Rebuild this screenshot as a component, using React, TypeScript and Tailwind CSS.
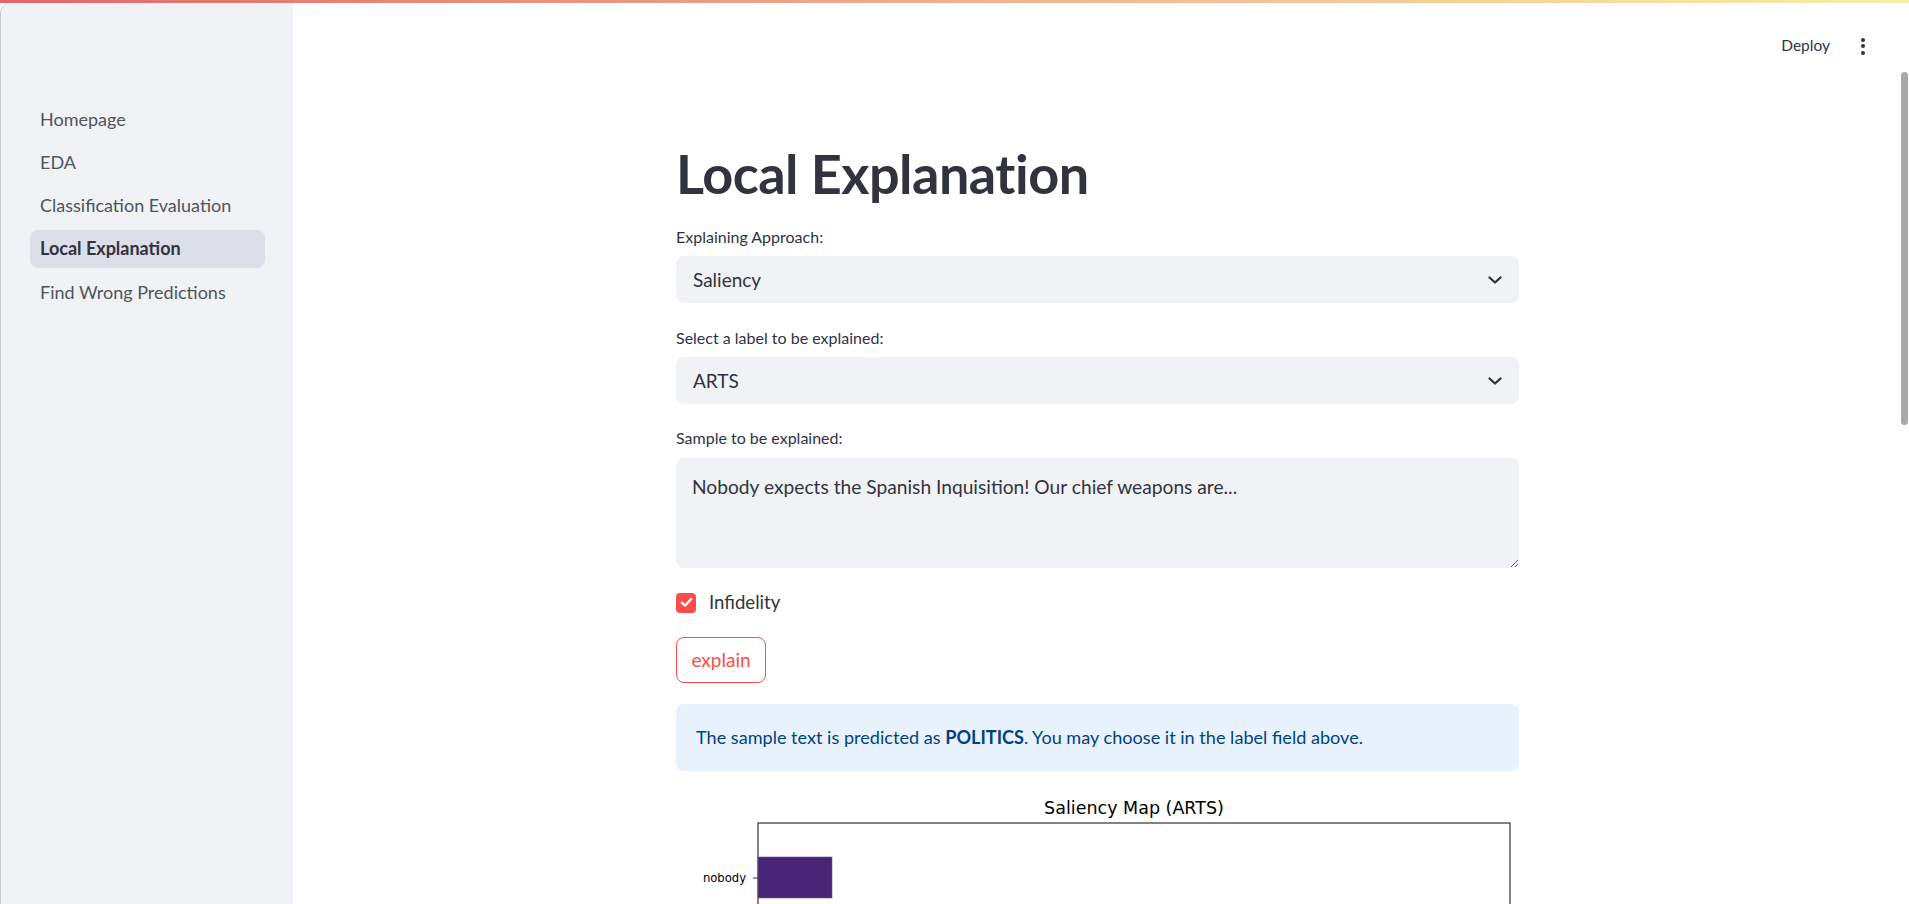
import React from "react";

const NAV = ["Homepage", "EDA", "Classification Evaluation", "Local Explanation", "Find Wrong Predictions"];

function Chevron() {
  return (
    <svg width="14" height="8" viewBox="0 0 14 8" fill="none">
      <path d="M1.5 1.5 L7 6.5 L12.5 1.5" stroke="#31333f" strokeWidth="2.3" strokeLinecap="round" strokeLinejoin="round" />
    </svg>
  );
}

function Select({ value }: { value: string }) {
  return (
    <div className="h-[47px] w-full rounded-[8px] bg-[#f0f2f6] flex items-center justify-between pl-[17px] pr-[17px]">
      <span className="text-[19px] text-[#31333f] pt-[1px]">{value}</span>
      <Chevron />
    </div>
  );
}

function Label({ children }: { children: React.ReactNode }) {
  return <div className="h-[20px] flex items-center text-[16px] text-[#31333f]">{children}</div>;
}

export default function App() {
  return (
    <div
      className="relative h-screen w-full overflow-hidden bg-white"
      style={{ fontFamily: "Lato, 'Open Sans', sans-serif" }}
    >
      <div className="h-[3px] w-full bg-gradient-to-r from-[#e0666a] via-[#eeb08c] to-[#f7efa8]" />
      <div className="flex h-[901px]">
        <aside className="w-[293px] shrink-0 bg-[#f0f2f6] rounded-tl-[10px] border-l border-[#c9c9cc] pt-[97px] pl-[29px] pr-[28px]">
          <nav className="flex flex-col gap-[5.25px]">
            {NAV.map((n) => {
              const active = n === "Local Explanation";
              return (
                <div
                  key={n}
                  className={
                    active
                      ? "h-[38px] rounded-[8px] bg-[#dcdfe7] flex items-center pl-[10px] text-[18px] font-bold text-[#31333f]"
                      : "h-[38px] rounded-[8px] flex items-center pl-[10px] text-[18px] text-[#51535e]"
                  }
                >
                  {n}
                </div>
              );
            })}
          </nav>
        </aside>
        <main className="relative flex-1 min-w-0 pr-[7px]">
          <header className="h-[85px] flex items-center justify-end pr-[37px] gap-[31px] pt-[1px]">
            <span className="text-[15.5px] text-[#31333f]">Deploy</span>
            <div className="flex flex-col gap-[2.5px] items-center">
              <span className="block w-[4px] h-[4px] rounded-full bg-[#31333f]" />
              <span className="block w-[4px] h-[4px] rounded-full bg-[#31333f]" />
              <span className="block w-[4px] h-[4px] rounded-full bg-[#31333f]" />
            </div>
          </header>
          <div className="mx-auto w-[843px] flex flex-col">
            <h1 className="shrink-0 h-[139px] pt-[54px] text-[54px] leading-[64px] font-bold text-[#31333f] tracking-[-0.5px]">
              Local Explanation
            </h1>
            <Label>Explaining Approach:</Label>
            <div className="mt-[9px]">
              <Select value="Saliency" />
            </div>
            <div className="mt-[25px]">
              <Label>Select a label to be explained:</Label>
            </div>
            <div className="mt-[9px]">
              <Select value="ARTS" />
            </div>
            <div className="mt-[24px]">
              <Label>Sample to be explained:</Label>
            </div>
            <textarea
              readOnly
              defaultValue="Nobody expects the Spanish Inquisition! Our chief weapons are..."
              className="mt-[10px] h-[110px] shrink-0 w-full rounded-[8px] bg-[#f0f2f6] px-[16px] pt-[15px] text-[19.2px] text-[#31333f] outline-none resize-y"
              style={{ fontFamily: "Lato, 'Open Sans', sans-serif" }}
            />
            <div className="mt-[22px] h-[25px] flex items-center gap-[13px]">
              <div className="w-[20px] h-[20px] rounded-[4px] bg-[#ff4b4b] flex items-center justify-center">
                <svg width="13" height="11" viewBox="0 0 13 11" fill="none">
                  <path d="M1.8 5.6 L5 8.6 L11.2 2" stroke="white" strokeWidth="2.4" strokeLinecap="round" strokeLinejoin="round" />
                </svg>
              </div>
              <span className="text-[18.6px] text-[#31333f]">Infidelity</span>
            </div>
            <div className="mt-[22px]">
              <button className="h-[46px] w-[90px] rounded-[8px] border border-[#ff4b4b] text-[19px] text-[#ff4b4b] bg-white">
                explain
              </button>
            </div>
            <div className="mt-[21px] h-[67px] shrink-0 rounded-[8px] bg-[#e8f2fc] flex items-center pl-[20px] text-[18.1px] text-[#004280]">
              <span>
                The sample text is predicted as <b>POLITICS</b>. You may choose it in the label field above.
              </span>
            </div>
            <svg width="843" height="300" className="mt-[19px] block shrink-0" style={{ fontFamily: "'DejaVu Sans', sans-serif" }}>
              <text x="458" y="24" textAnchor="middle" fontSize="17.5" fill="#000">Saliency Map (ARTS)</text>
              <rect x="82" y="33" width="752" height="300" fill="none" stroke="#333" strokeWidth="1.2" />
              <rect x="82" y="67" width="74" height="41" fill="#482677" stroke="#6e5b8e" strokeWidth="0.6" />
              <line x1="77" y1="88" x2="82" y2="88" stroke="#333" strokeWidth="1" />
              <text x="70" y="92" textAnchor="end" fontSize="11.6" fill="#000">nobody</text>
            </svg>
          </div>
          <div className="absolute right-[1px] top-[69px] w-[7px] h-[353px] rounded-full bg-[#a9a9ad]" />
        </main>
      </div>
    </div>
  );
}
